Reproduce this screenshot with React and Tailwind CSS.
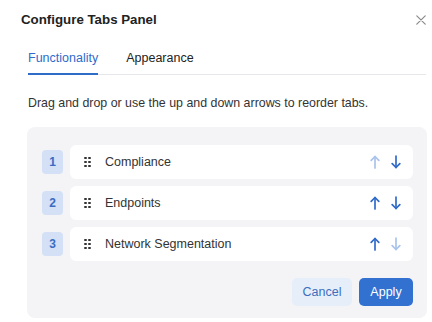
const tabs = [
  { n: 1, label: "Compliance", up: false, down: true },
  { n: 2, label: "Endpoints", up: true, down: true },
  { n: 3, label: "Network Segmentation", up: true, down: false },
];

function Arrow({ dir, active }) {
  return (
    <svg
      width="10"
      height="14"
      viewBox="0 0 10 14"
      fill="none"
      stroke={active ? "#2f6bc9" : "#a9c3ec"}
      strokeWidth="1.7"
      strokeLinecap="round"
      strokeLinejoin="round"
      className={dir === "down" ? "rotate-180" : ""}
    >
      <path d="M5 1.5V13" />
      <path d="M1.2 5.3L5 1.5l3.8 3.8" />
    </svg>
  );
}

function Grip() {
  return (
    <div className="grid grid-cols-2 gap-x-[1.5px] gap-y-[1.5px] w-[6.5px]">
      {[0, 1, 2, 3, 4, 5].map((i) => (
        <span key={i} className="w-[2.5px] h-[2.5px] rounded-[1px] bg-[#333]" />
      ))}
    </div>
  );
}

export default function App() {
  return (
    <div className="w-[432px] h-[322px] bg-white overflow-hidden font-['Liberation_Sans',Arial,sans-serif] text-[#2b2b2b]">
      {/* header */}
      <div className="flex items-center justify-between pl-[21px] pr-[6px] pt-[10px] h-[30px]">
        <h1 className="text-[13.3px] leading-[20px] font-bold text-[#222]">Configure Tabs Panel</h1>
        <svg width="10" height="10" viewBox="0 0 10 10" stroke="#8a8a8a" strokeWidth="1.2" strokeLinecap="round">
          <path d="M0.8 0.8l8.4 8.4M9.2 0.8L0.8 9.2" />
        </svg>
      </div>

      {/* tabs */}
      <div className="ml-[28px] mr-[6px] mt-[20px] flex gap-[28px] border-b border-[#e5e7eb]">
        <div className="-mb-px pb-[7px] border-b-2 border-[#2f6bc9] text-[12.5px] leading-[16px] text-[#2f6bc9]">
          Functionality
        </div>
        <div className="-mb-px pb-[7px] border-b-2 border-transparent text-[12.5px] leading-[16px] text-[#222]">
          Appearance
        </div>
      </div>

      <p className="ml-[28px] mt-[19px] text-[12.4px] leading-[18px] text-[#333]">
        Drag and drop or use the up and down arrows to reorder tabs.
      </p>

      {/* list panel */}
      <div className="ml-[27px] mr-[5px] mt-[15px] rounded-lg bg-[#f4f4f6] pt-[18px] pl-[15px] pr-[14px] pb-[12px]">
        <div className="flex flex-col gap-[7px]">
          {tabs.map((t) => (
            <div key={t.n} className="flex items-center gap-[7px]">
              <div className="w-[21px] h-[24px] rounded-[4px] bg-[#d3e0f6] flex items-center justify-center text-[12px] font-bold text-[#3a6cc2]">
                {t.n}
              </div>
              <div className="flex-1 h-[34px] rounded-md bg-white flex items-center pl-[14px] pr-[12px]">
                <Grip />
                <span className="ml-[14.5px] text-[12.5px] text-[#333]">{t.label}</span>
                <div className="ml-auto flex items-center gap-[11px]">
                  <Arrow dir="up" active={t.up} />
                  <Arrow dir="down" active={t.down} />
                </div>
              </div>
            </div>
          ))}
        </div>

        <div className="mt-[17px] flex justify-end gap-[7px]">
          <button className="w-[60px] h-[28px] rounded-[5px] bg-[#e6eefa] text-[12.5px] text-[#3c6fbd]">
            Cancel
          </button>
          <button className="w-[54px] h-[28px] rounded-[5px] bg-[#3371d1] text-[12.5px] text-white font-medium">
            Apply
          </button>
        </div>
      </div>
    </div>
  );
}
